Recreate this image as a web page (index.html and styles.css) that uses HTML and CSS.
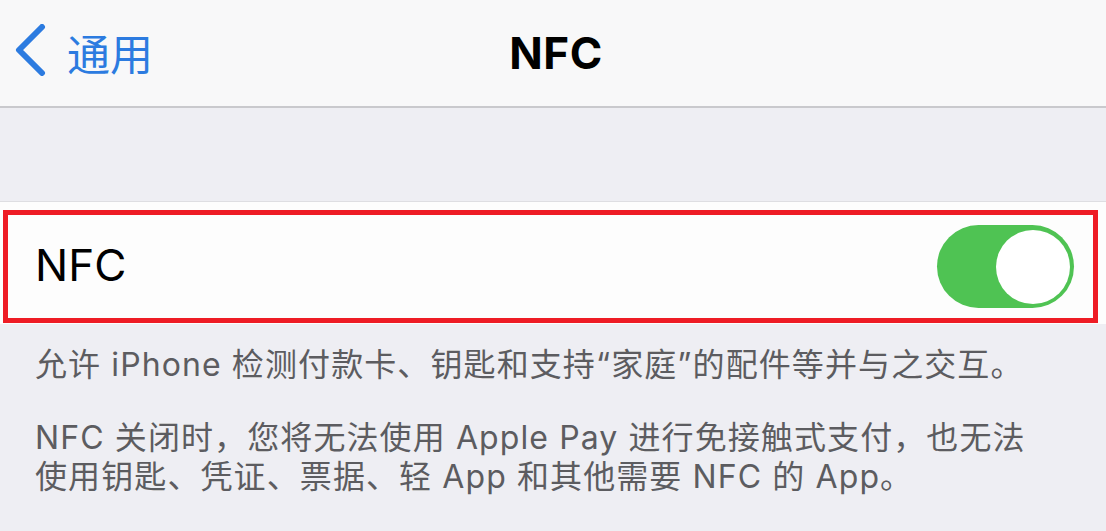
FILE: index.html
```html
<!DOCTYPE html>
<html lang="zh-CN">
<head>
    <meta charset="UTF-8">
    <meta name="viewport" content="width=device-width, initial-scale=1.0">
    <title>NFC</title>
    <link rel="stylesheet" href="styles.css">
</head>
<body>
    <header class="navbar">
        <a class="back" href="#">
            <svg class="chevron" width="32" height="52" viewBox="0 0 32 52">
                <path d="M28 3 L5 26 L28 49" fill="none" stroke="currentColor" stroke-width="6" stroke-linecap="round" stroke-linejoin="round"/>
            </svg>
            <span>通用</span>
        </a>
        <h1 class="title">NFC</h1>
        <div></div>
    </header>

    <div class="spacer"></div>

    <div class="cell">
        <div class="highlight">
            <span class="label">NFC</span>
            <div class="toggle on"><div class="knob"></div></div>
        </div>
    </div>

    <div class="footer">
        <p>允许 iPhone 检测付款卡、钥匙和支持“家庭”的配件等并与之交互。</p>
        <p>NFC 关闭时，您将无法使用 Apple Pay 进行免接触式支付，也无法使用钥匙、凭证、票据、轻 App 和其他需要 NFC 的 App。</p>
    </div>
</body>
</html>
```

FILE: styles.css
```css
body {
    margin: 0;
    background: #eeeef3;
    font-family: Inter, "Noto Sans CJK SC", sans-serif;
}
.navbar {
    display: grid;
    grid-template-columns: 1fr auto 1fr;
    align-items: center;
    height: 106px;
    background: #f8f8f9;
    border-bottom: 2px solid #c9c9cd;
}
.back {
    display: flex;
    align-items: center;
    gap: 21px;
    padding-left: 14px;
    color: #2c7be0;
    text-decoration: none;
    font-size: 43px;
}
.back span {
    margin-top: -2px;
}
.chevron {
    display: block;
    margin-top: -6px;
}
.title {
    margin: 0 0 0 6px;
    font-size: 44px;
    font-weight: 700;
    color: #000;
    letter-spacing: 0.5px;
}
.spacer {
    height: 93px;
}
.cell {
    background: #fdfdfd;
    border-top: 1px solid #dedee2;
    padding: 8px 8px 1px 3px;
}
.highlight {
    display: flex;
    align-items: center;
    justify-content: space-between;
    height: 103px;
    border: 5px solid #ee1c25;
    padding: 0 19px 0 27px;
}
.label {
    font-size: 44px;
    color: #000;
    margin-top: -4px;
}
.toggle {
    position: relative;
    width: 137px;
    height: 83px;
    border-radius: 42px;
    background: #4fc353;
}
.knob {
    position: absolute;
    top: 5px;
    right: 4px;
    width: 74px;
    height: 74px;
    border-radius: 50%;
    background: #fff;
}
.footer {
    padding: 21px 60px 0 35px;
    color: #5c5c60;
    font-size: 32px;
    line-height: 39px;
    letter-spacing: 1.1px;
}
.footer p {
    margin: 0 0 34px;
}
```
